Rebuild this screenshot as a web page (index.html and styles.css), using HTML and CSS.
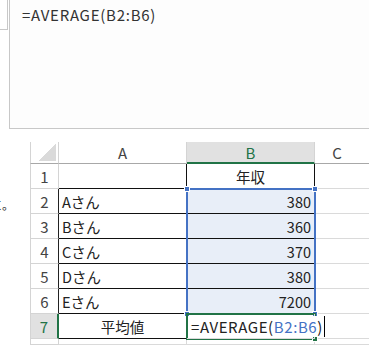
FILE: index.html
```html
<!DOCTYPE html>
<html lang="ja">
<head>
<meta charset="utf-8">
<link rel="stylesheet" href="styles.css">
</head>
<body>
<div class="top">
  <div class="namebox"></div>
  <div class="formula">=AVERAGE(B2:B6)</div>
</div>
<div class="sheet">
  <div class="grid">
    <div class="m"></div>
    <div class="corner"></div>
    <div class="ch">A</div>
    <div class="ch sel">B</div>
    <div class="ch last">C</div>

    <div class="m"></div>
    <div class="rh">1</div>
    <div class="c a a1"></div>
    <div class="c b tb center">年収</div>
    <div class="c last"></div>

    <div class="m note"><span>に。</span></div>
    <div class="rh dark">2</div>
    <div class="c a tb">Aさん</div>
    <div class="c b tb num hl">380</div>
    <div class="c last"></div>

    <div class="m"></div>
    <div class="rh dark">3</div>
    <div class="c a tb">Bさん</div>
    <div class="c b tb num hl">360</div>
    <div class="c last"></div>

    <div class="m"></div>
    <div class="rh dark">4</div>
    <div class="c a tb">Cさん</div>
    <div class="c b tb num hl">370</div>
    <div class="c last"></div>

    <div class="m"></div>
    <div class="rh dark">5</div>
    <div class="c a tb">Dさん</div>
    <div class="c b tb num hl">380</div>
    <div class="c last"></div>

    <div class="m"></div>
    <div class="rh dark">6</div>
    <div class="c a tb">Eさん</div>
    <div class="c b tb num hl">7200</div>
    <div class="c last"></div>

    <div class="m"></div>
    <div class="rh active">7</div>
    <div class="c a tb center">平均値</div>
    <div class="c b edit"><span class="editor"><span class="fx">=AVERAGE(</span><span class="ref">B2:B6</span><span class="fx">)</span><span class="caret"></span></span></div>
    <div class="c last"></div>

    <div class="m"></div>
    <div class="rh"></div>
    <div class="c"></div>
    <div class="c"></div>
    <div class="c last"></div>
  </div>
  <div class="range">
    <i class="h tl"></i><i class="h tr"></i><i class="h bl"></i><i class="h br"></i>
  </div>
  <div class="active-cell"><i class="fill"></i></div>
</div>
</body>
</html>
```

FILE: styles.css
```css
* { box-sizing: border-box; margin: 0; padding: 0; }
html, body { width: 369px; height: 345px; overflow: hidden; background: #fff; }
body { font-family: "Noto Sans CJK JP", sans-serif; color: #222; }

.top { display: flex; align-items: flex-start; height: 142px; }
.namebox { width: 8px; height: 30px; border-right: 1px solid #c8c8c8; border-bottom: 1px solid #c8c8c8; }
.formula {
  flex: 1; height: 129px; margin-left: 1px;
  border-left: 1px solid #c8c8c8; border-bottom: 1px solid #c8c8c8;
  padding: 6px 0 0 12px;
  font-size: 15px; line-height: 18px; color: #333; letter-spacing: 0.75px;
  background: #fdfdfd;
}

.sheet { position: relative; height: 203px; }
.grid {
  display: grid;
  grid-template-columns: 30px 29px 128px 128px 1fr;
  grid-template-rows: 22px repeat(7, 25px) 1fr;
  height: 100%;
  font-size: 14.5px;
}
.grid > div { display: flex; align-items: center; white-space: nowrap; }

.note { justify-content: flex-end; overflow: hidden; padding-right: 16px; font-size: 12px; color: #333; padding-top: 6px; }

.corner { position: relative; border-left: 1px solid #d4d4d4; border-right: 1px solid #d4d4d4; border-bottom: 1px solid #a8a8a8; }
.corner::after {
  content: ""; position: absolute; right: 2px; bottom: 2px; width: 17px; height: 17px;
  background: linear-gradient(to bottom right, transparent 50%, #dadada 50%);
}
.ch { justify-content: center; color: #444; border-right: 1px solid #d4d4d4; border-bottom: 1px solid #a8a8a8; font-size: 15px; }
.ch.sel { background: #e1e1e1; color: #217346; border-bottom: 2px solid #217346; }
.ch.last { border-right: none; padding-right: 10px; }

.rh { justify-content: center; color: #444; border-left: 1px solid #d4d4d4; border-right: 1px solid #d4d4d4; border-bottom: 1px solid #d4d4d4; font-size: 15px; }
.rh.dark { border-right-color: #222; }
.rh.active { background: #e1e1e1; color: #217346; border-right: 2px solid #217346; }

.c { border-right: 1px solid #dadada; border-bottom: 1px solid #dadada; padding: 0 3px; }
.c.last { border-right: none; }
.a.a1 { border-bottom-color: #111; border-right-color: #111; }
.c.tb { border-bottom-color: #111; border-right-color: #111; }
.center { justify-content: center; }
.num { justify-content: flex-end; }
.hl { background: #e8eef8; }

.edit { font-size: 15px; padding-left: 2px; overflow: visible; position: relative; z-index: 1; }
.editor { display: flex; align-items: center; height: 21px; padding-left: 2px; padding-right: 1px; background: #fff; letter-spacing: 0.6px; }
.fx { color: #222; }
.ref { color: #4472c4; }
.caret { display: inline-block; width: 1px; height: 21px; background: #000; margin-left: 1px; }

.range {
  position: absolute; left: 186px; top: 46px; width: 130px; height: 127px;
  border: 2px solid #4472c4;
}
.h { position: absolute; width: 6px; height: 6px; background: #4472c4; border: 1px solid #fff; }
.h.tl { left: -4px; top: -4px; }
.h.tr { right: -4px; top: -4px; }
.h.bl { left: -4px; bottom: -4px; }
.h.br { right: -4px; bottom: -4px; }

.active-cell {
  position: absolute; left: 186px; top: 171px; width: 130px; height: 27px;
  border: 2px solid #217346;
}
.fill { position: absolute; right: -4px; bottom: -4px; width: 6px; height: 6px; background: #217346; border: 1px solid #fff; }
```
